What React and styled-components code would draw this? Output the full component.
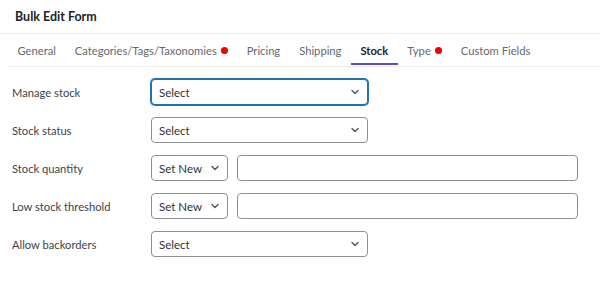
import React from "react";
import styled, { createGlobalStyle } from "styled-components";

const Global = createGlobalStyle`
  html, body { margin: 0; padding: 0; background: #fff; }
  body { font-family: Lato, "Noto Sans", Arial, sans-serif; }
  * { box-sizing: border-box; }
`;

const Page = styled.div`
  width: 600px;
  height: 281px;
  background: #fff;
  display: flex;
  flex-direction: column;
`;

const Header = styled.div`
  height: 34px;
  padding: 0 15px;
  display: flex;
  align-items: center;
  border-bottom: 1px solid #ececec;
`;

const Title = styled.h2`
  margin: 0;
  font-size: 12.5px;
  font-weight: 700;
  color: #1d2327;
  padding-bottom: 1px;
`;

const Tabs = styled.div`
  margin-left: 8px;
  height: 33px;
  display: flex;
  border-bottom: 1px solid #ececec;
`;

const Tab = styled.div`
  display: flex;
  align-items: center;
  white-space: nowrap;
  padding: 3px 9.5px 0;
  font-size: 11.2px;
  color: ${(p) => (p.$active ? "#1d2327" : "#646970")};
  font-weight: ${(p) => (p.$active ? 700 : 400)};
  border-bottom: 2px solid ${(p) => (p.$active ? "#5b4ec7" : "transparent")};
  margin-bottom: 1px;
`;

const Dot = styled.span`
  width: 7px;
  height: 7px;
  border-radius: 50%;
  background: #f20000;
  margin-left: 4px;
`;

const Form = styled.div`
  padding: 12px 0 0 12px;
  display: grid;
  grid-template-columns: 139px 1fr;
  row-gap: 12px;
  align-items: center;
`;

const Label = styled.label`
  font-size: 11.2px;
  color: #3c434a;
`;

const Controls = styled.div`
  display: flex;
  gap: 9px;
  height: 26px;
`;

const SelectBox = styled.div`
  position: relative;
  width: ${(p) => p.$w}px;
  height: 26px;
  border: 1px solid ${(p) => (p.$focus ? "#2271b1" : "#8c8f94")};
  box-shadow: ${(p) => (p.$focus ? "0 0 0 1px #2271b1" : "none")};
  border-radius: 4px;
  display: flex;
  align-items: center;
  white-space: nowrap;
  padding: 0 20px 0 7px;
  font-size: 11.5px;
  color: #2c3338;
  background: #fff;
`;

const Chevron = styled.svg`
  position: absolute;
  right: 6px;
  top: 50%;
  margin-top: -6px;
  width: 12px;
  height: 12px;
`;

const TextInput = styled.input`
  width: 341px;
  height: 26px;
  border: 1px solid #8c8f94;
  border-radius: 4px;
  padding: 0 8px;
  font-family: inherit;
  font-size: 11.5px;
  outline: none;
`;

const Arrow = () => (
  <Chevron viewBox="0 0 12 12">
    <path d="M3 4.5l3 3 3-3" fill="none" stroke="#50575e" strokeWidth="1.4" strokeLinecap="round" strokeLinejoin="round" />
  </Chevron>
);

const Select = ({ w, focus, children }) => (
  <SelectBox $w={w} $focus={focus}>
    {children}
    <Arrow />
  </SelectBox>
);

const tabs = [
  { name: "General" },
  { name: "Categories/Tags/Taxonomies", dot: true },
  { name: "Pricing" },
  { name: "Shipping" },
  { name: "Stock", active: true },
  { name: "Type", dot: true },
  { name: "Custom Fields" },
];

export default function App() {
  return (
    <Page>
      <Global />
      <Header>
        <Title>Bulk Edit Form</Title>
      </Header>
      <Tabs>
        {tabs.map((t) => (
          <Tab key={t.name} $active={t.active}>
            {t.name}
            {t.dot && <Dot />}
          </Tab>
        ))}
      </Tabs>
      <Form>
        <Label>Manage stock</Label>
        <Controls>
          <Select w={217} focus>Select</Select>
        </Controls>
        <Label>Stock status</Label>
        <Controls>
          <Select w={217}>Select</Select>
        </Controls>
        <Label>Stock quantity</Label>
        <Controls>
          <Select w={77}>Set New</Select>
          <TextInput />
        </Controls>
        <Label>Low stock threshold</Label>
        <Controls>
          <Select w={77}>Set New</Select>
          <TextInput />
        </Controls>
        <Label>Allow backorders</Label>
        <Controls>
          <Select w={217}>Select</Select>
        </Controls>
      </Form>
    </Page>
  );
}
